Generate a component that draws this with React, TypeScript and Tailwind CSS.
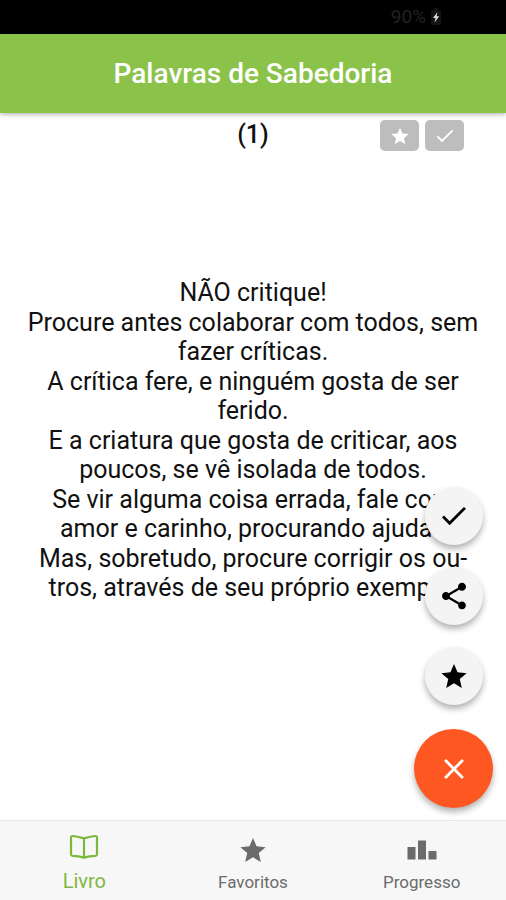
import { useState } from 'react'
import { IoMdCheckmark, IoMdClose, IoMdShare, IoMdStar } from 'react-icons/io'

const verses = [
  'NÃO critique!',
  'Procure antes colaborar com todos, sem fazer críticas.',
  'A crítica fere, e ninguém gosta de ser ferido.',
  'E a criatura que gosta de criticar, aos poucos, se vê isolada de todos.',
  'Se vir alguma coisa errada, fale com amor e carinho, procurando ajudar.',
  'Mas, sobretudo, procure corrigir os ou\u00adtros, através de seu próprio exemplo.',
]

function BookIcon() {
  return (
    <svg viewBox="0 0 30 26" className="w-[30px] h-[26px]" fill="none" stroke="currentColor" strokeWidth="2.2" strokeLinejoin="round">
      <path d="M15 4.400C11.500 3.200 7.500 2.400 4 2Q2 1.800 2 3.600V20Q2 21.600 3.600 21.800C7.500 22 11.500 22.600 15 23.600C18.500 22.600 22.500 22 26.400 21.800Q28 21.600 28 20V3.600Q28 1.800 26 2C22.500 2.400 18.500 3.200 15 4.400ZM15 4.400V23.600" />
    </svg>
  )
}

function PodiumIcon() {
  return (
    <svg viewBox="0 0 30 20" className="w-[30px] h-5" fill="currentColor">
      <rect x="0.500" y="7" width="8" height="12.500" />
      <rect x="11" y="0.500" width="8" height="19" />
      <rect x="21.500" y="11" width="8" height="8.500" />
    </svg>
  )
}

function BatteryIcon() {
  return (
    <svg viewBox="0 0 12 18" className="w-3 h-[18px]">
      <path d="M4 0h4v2h3v15H1V2h3z" fill="#141414" />
      <path d="M7.500 4L3 10h2.600L4.500 14.500L9.200 8.300H6.500z" fill="#e5e5e5" />
    </svg>
  )
}

export default function App() {
  const [open, setOpen] = useState(true)
  const [tab, setTab] = useState('livro')

  const tabClass = (name: string) => (tab === name ? 'text-[#7cb83e]' : 'text-[#6b6b6b]')

  return (
    <div className="min-h-screen flex flex-col bg-white font-[Roboto,sans-serif] text-[#111]">
      <div className="h-[34px] shrink-0 bg-black flex items-center justify-end gap-1 pr-16">
        <span className="text-[19px] leading-6 text-[#222]">90%</span>
        <BatteryIcon />
      </div>

      <header className="h-[79px] shrink-0 bg-[#8bc34a] flex items-center justify-center shadow-[0_2px_4px_rgba(0,0,0,0.25)]">
        <h1 className="text-[28px] leading-8 font-medium text-white">Palavras de Sabedoria</h1>
      </header>

      <main className="relative flex-1 flex flex-col">
        <div className="grid grid-cols-[1fr_auto_1fr] items-start pt-[7px] px-[42px]">
          <span />
          <h2 className="text-[25px] leading-[30px] font-medium">(1)</h2>
          <div className="flex justify-end gap-[6px]">
            <button aria-label="Favorito" className="w-[39px] h-[31px] rounded-[5px] bg-[#bdbdbd] text-white flex items-center justify-center">
              <IoMdStar size={22} />
            </button>
            <button aria-label="Lido" className="w-[39px] h-[31px] rounded-[5px] bg-[#bdbdbd] text-white flex items-center justify-center">
              <IoMdCheckmark size={22} />
            </button>
          </div>
        </div>

        <article className="flex-1 flex flex-col justify-center gap-px px-5 pb-[92px] text-center text-[25px] leading-[29px]">
          {verses.map((verse) => (
            <p key={verse}>{verse}</p>
          ))}
        </article>

        <div className="absolute right-[13px] bottom-3 flex flex-col items-center gap-6">
          {open && (
            <div className="flex flex-col gap-[22px]">
              <button aria-label="Marcar como lido" className="size-[58px] rounded-full bg-[#f4f4f4] text-black flex items-center justify-center shadow-[0_4px_6px_rgba(0,0,0,0.3)]">
                <IoMdCheckmark size={32} />
              </button>
              <button aria-label="Compartilhar" className="size-[58px] rounded-full bg-[#f4f4f4] text-black flex items-center justify-center shadow-[0_4px_6px_rgba(0,0,0,0.3)]">
                <IoMdShare size={32} />
              </button>
              <button aria-label="Adicionar aos favoritos" className="size-[58px] rounded-full bg-[#f4f4f4] text-black flex items-center justify-center shadow-[0_4px_6px_rgba(0,0,0,0.3)]">
                <IoMdStar size={32} />
              </button>
            </div>
          )}
          <button
            aria-label={open ? 'Fechar' : 'Abrir'}
            onClick={() => setOpen(!open)}
            className="size-[79px] rounded-full bg-[#ff5722] text-white flex items-center justify-center shadow-[0_4px_6px_rgba(0,0,0,0.3)]"
          >
            <IoMdClose size={34} />
          </button>
        </div>
      </main>

      <nav className="h-20 shrink-0 grid grid-cols-3 bg-[#f7f7f7] border-t border-[#e6e6e6]">
        <button onClick={() => setTab('livro')} className={`flex flex-col items-center justify-end gap-[10px] pb-2 ${tabClass('livro')}`}>
          <BookIcon />
          <span className="text-[20px] leading-[22px]">Livro</span>
        </button>
        <button onClick={() => setTab('favoritos')} className={`flex flex-col items-center justify-end gap-[6px] pb-2 ${tabClass('favoritos')}`}>
          <IoMdStar size={32} />
          <span className="text-[17px] leading-5">Favoritos</span>
        </button>
        <button onClick={() => setTab('progresso')} className={`flex flex-col items-center justify-end gap-3 pb-2 ${tabClass('progresso')}`}>
          <PodiumIcon />
          <span className="text-[17px] leading-5">Progresso</span>
        </button>
      </nav>
    </div>
  )
}
